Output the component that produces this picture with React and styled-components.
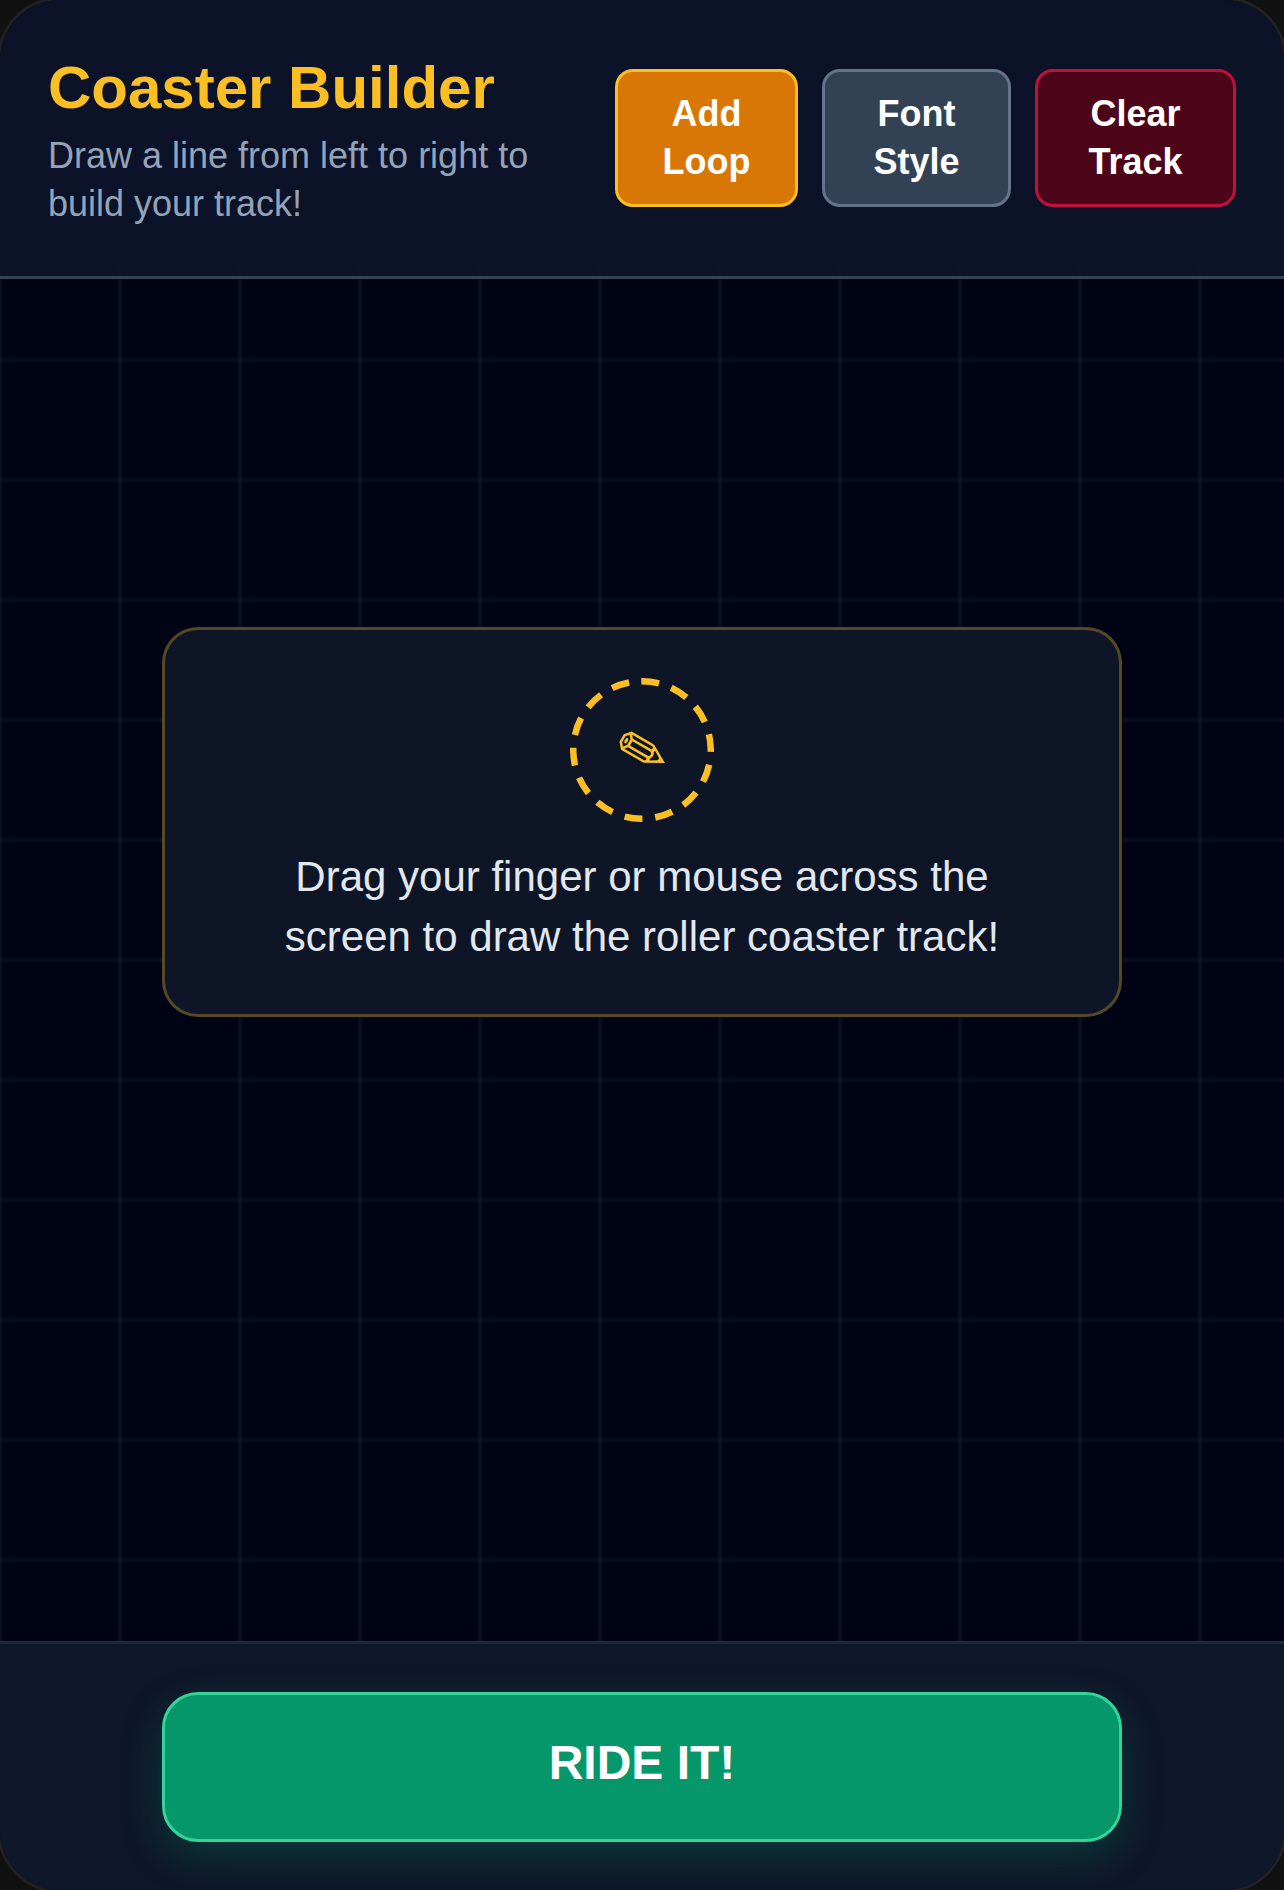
import React from "react";
import styled, { createGlobalStyle } from "styled-components";

const Global = createGlobalStyle`
  html, body { margin: 0; padding: 0; background: #111111; }
  * { box-sizing: border-box; }
`;

const Shell = styled.div`
  width: 1284px;
  height: 1890px;
  display: flex;
  flex-direction: column;
  border-radius: 60px;
  overflow: hidden;
  box-shadow: 0 0 0 3px #222222;
  background: #020617;
  font-family: "Liberation Sans", Arial, sans-serif;
`;

const Header = styled.header`
  position: relative;
  display: flex;
  align-items: center;
  justify-content: space-between;
  gap: 24px;
  height: 279px;
  padding: 48px;
  background: #0c1328;
  border-bottom: 3px solid #334155;

  &::after {
    content: "";
    position: absolute;
    left: 0;
    right: 0;
    bottom: 0;
    height: 26px;
    background-image: linear-gradient(90deg, rgba(30, 41, 59, 0.12) 0, transparent 3px, transparent 117px, rgba(30, 41, 59, 0.12) 120px);
    background-size: 120px 120px;
    -webkit-mask-image: linear-gradient(180deg, transparent, #000);
    mask-image: linear-gradient(180deg, transparent, #000);
    pointer-events: none;
  }
`;

const Intro = styled.div`
  flex: 1;
  min-width: 0;
`;

const Title = styled.h1`
  margin: 0 0 5px;
  font-size: 60px;
  line-height: 79px;
  font-weight: 700;
  color: #fbbf24;
`;

const Subtitle = styled.p`
  margin: 0;
  font-size: 36px;
  line-height: 48px;
  color: #94a3b8;
`;

const Actions = styled.div`
  display: flex;
  flex-shrink: 0;
  gap: 24px;
`;

const ActionButton = styled.button`
  width: ${(p) => p.$w}px;
  height: 138px;
  padding: 0;
  border: 3px solid ${(p) => p.$line};
  border-radius: 18px;
  background: ${(p) => p.$fill};
  color: #ffffff;
  font-family: inherit;
  font-size: 36px;
  line-height: 48px;
  font-weight: 700;
`;

const Canvas = styled.main`
  flex: 1;
  display: flex;
  justify-content: center;
  align-items: flex-start;
  padding-top: 348px;
  background-color: #000314;
  background-image:
    linear-gradient(90deg, rgba(30, 41, 59, 0.3) 0, rgba(30, 41, 59, 0.3) 1px, transparent 3.5px, transparent 116.5px, rgba(30, 41, 59, 0.3) 119px, rgba(30, 41, 59, 0.3) 120px),
    linear-gradient(180deg, rgba(30, 41, 59, 0.24) 0, rgba(30, 41, 59, 0.24) 1px, transparent 3.5px, transparent 116.5px, rgba(30, 41, 59, 0.24) 119px, rgba(30, 41, 59, 0.24) 120px);
  background-size: 120px 120px;
  background-position: 0 81px;
`;

const HintCard = styled.section`
  width: 960px;
  height: 390px;
  display: flex;
  flex-direction: column;
  align-items: center;
  gap: 24px;
  padding: 48px 72px;
  border: 3px solid rgba(251, 191, 36, 0.3);
  border-radius: 36px;
  background: rgba(15, 22, 40, 0.95);
`;

const PencilRing = styled.div`
  position: relative;
  width: 144px;
  height: 144px;
  flex-shrink: 0;
  display: flex;
  align-items: center;
  justify-content: center;
`;

const RingArt = styled.svg`
  position: absolute;
  inset: 0;
`;

const PencilGlyph = styled.span`
  display: block;
  color: #fbbf24;
  font-family: "DejaVu Sans", sans-serif;
  font-size: 63px;
  line-height: 1;
  transform: translateY(1px) rotate(30deg);
`;

const HintText = styled.p`
  margin: 1px 0 0;
  font-size: 42px;
  line-height: 60px;
  text-align: center;
  color: #e2e8f0;
`;

const Footer = styled.footer`
  height: 249px;
  display: flex;
  justify-content: center;
  padding: 48px 0;
  background: #0f172a;
  border-top: 3px solid #1e293b;
`;

const RideButton = styled.button`
  width: 960px;
  height: 150px;
  padding: 0 0 9px;
  border: 3px solid #34d399;
  border-radius: 36px;
  background: #059669;
  color: #ffffff;
  font-family: inherit;
  font-size: 48px;
  font-weight: 700;
  box-shadow: 0 15px 40px rgba(5, 150, 105, 0.25);
`;

export default function App() {
  return (
    <>
      <Global />
      <Shell>
        <Header>
          <Intro>
            <Title>Coaster Builder</Title>
            <Subtitle>Draw a line from left to right to build your track!</Subtitle>
          </Intro>
          <Actions>
            <ActionButton $w={183} $fill="#d97706" $line="#fbbf24">Add<br />Loop</ActionButton>
            <ActionButton $w={189} $fill="#334155" $line="#64748b">Font<br />Style</ActionButton>
            <ActionButton $w={201} $fill="#4c0519" $line="#be123c">Clear<br />Track</ActionButton>
          </Actions>
        </Header>
        <Canvas>
          <HintCard>
            <PencilRing>
              <RingArt width="144" height="144" viewBox="0 0 144 144">
                <circle
                  cx="72"
                  cy="72"
                  r="68.75"
                  fill="none"
                  stroke="#fbbf24"
                  strokeWidth="6.5"
                  strokeDasharray="18 12.85"
                  transform="rotate(-90.6 72 72)"
                />
              </RingArt>
              <PencilGlyph>✏</PencilGlyph>
            </PencilRing>
            <HintText>Drag your finger or mouse across the screen to draw the roller coaster track!</HintText>
          </HintCard>
        </Canvas>
        <Footer>
          <RideButton>RIDE IT!</RideButton>
        </Footer>
      </Shell>
    </>
  );
}
